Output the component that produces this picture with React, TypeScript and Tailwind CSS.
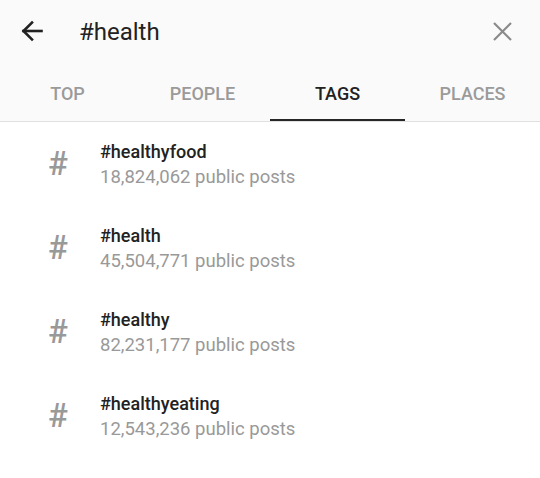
import React from 'react';

const tags = [
  { name: '#healthyfood', posts: '18,824,062' },
  { name: '#health', posts: '45,504,771' },
  { name: '#healthy', posts: '82,231,177' },
  { name: '#healthyeating', posts: '12,543,236' },
];

const tabs = ['TOP', 'PEOPLE', 'TAGS', 'PLACES'];

const App = () => {
  return (
    <div className="w-[540px] h-[478px] bg-white font-['Roboto',sans-serif] overflow-hidden">
      <div className="bg-[#fafafa] border-b border-[#e0e0e0]">
        <div className="h-[62px] flex items-center">
          <div className="w-[79px] flex items-center pl-[21px]">
            <svg width="22" height="22" viewBox="0 0 22 22" fill="none" stroke="#222" strokeWidth="2.6" strokeLinecap="square">
              <path d="M2.5 11H20.5" />
              <path d="M11 2.5L2.5 11L11 19.5" />
            </svg>
          </div>
          <div className="flex-1 text-[24px] text-[#222] pt-[2px]">#health</div>
          <div className="pr-[28px] flex items-center">
            <svg width="19" height="19" viewBox="0 0 19 19" fill="none" stroke="#8a8a8a" strokeWidth="2.2">
              <path d="M1 1L18 18" />
              <path d="M18 1L1 18" />
            </svg>
          </div>
        </div>
        <div className="grid grid-cols-4 h-[59px]">
          {tabs.map((t) => (
            <div
              key={t}
              className={
                t === 'TAGS'
                  ? 'flex items-center justify-center text-[18px] font-medium text-[#222] border-b-2 border-[#262626] pt-[6px]'
                  : 'flex items-center justify-center text-[18px] font-medium text-[#9a9a9a] pt-[4px]'
              }
            >
              {t}
            </div>
          ))}
        </div>
      </div>
      <div>
        {tags.map((tag) => (
          <div key={tag.name} className="h-[84px] flex items-center">
            <div className="w-[100px] pl-[48px]">
              <span className="text-[33px] font-medium text-[#999] leading-none">#</span>
            </div>
            <div className="flex flex-col">
              <span className="text-[18px] font-medium text-[#222] leading-[24px]">{tag.name}</span>
              <span className="text-[18.5px] text-[#999] leading-[24px] mt-[1px]">{tag.posts} public posts</span>
            </div>
          </div>
        ))}
      </div>
    </div>
  );
};

export default App;
